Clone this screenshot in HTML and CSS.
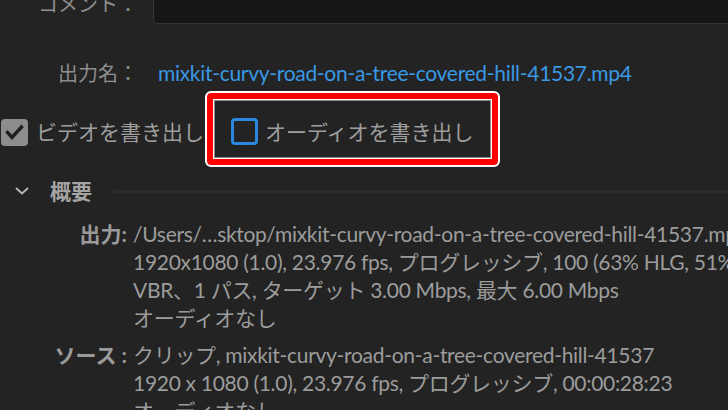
FILE: index.html
```html
<!DOCTYPE html>
<html lang="ja">
<head>
  <meta charset="UTF-8" />
  <meta name="viewport" content="width=device-width, initial-scale=1.0"/>
  <title>書き出し設定</title>
  <link rel="stylesheet" href="styles.css">
</head>
<body>
  <div class="panel">
    <div class="field comment-row">
      <div class="field-label">コメント：</div>
      <div class="comment-input"></div>
    </div>

    <div class="field name-row">
      <div class="field-label">出力名：</div>
      <div class="file-name">mixkit-curvy-road-on-a-tree-covered-hill-41537.mp4</div>
    </div>

    <div class="export-row">
      <div class="option video-option">
        <span class="checkbox checked">
          <svg width="27" height="27" viewBox="0 0 27 27">
            <path d="M6.5 13.5 L11 18.5 L20.5 8" fill="none" stroke="#1f1f1f" stroke-width="3.4" stroke-linecap="square"/>
          </svg>
        </span>
        <span>ビデオを書き出し</span>
      </div>
      <!-- highlight around audio export -->
      <div class="highlight">
        <div class="option audio-option">
          <span class="checkbox unchecked"></span>
          <span>オーディオを書き出し</span>
        </div>
      </div>
    </div>

    <div class="summary-head">
      <svg class="chevron" width="16" height="10" viewBox="0 0 16 10">
        <path d="M2 2 L8 7.5 L14 2" fill="none" stroke="#b5b5b5" stroke-width="2"/>
      </svg>
      <span class="summary-title">概要</span>
      <span class="summary-rule"></span>
    </div>

    <div class="info">
      <div class="info-label">出力:</div>
      <div class="info-lines">
        <div>/Users/…sktop/mixkit-curvy-road-on-a-tree-covered-hill-41537.mp4</div>
        <div>1920x1080 (1.0), 23.976 fps, プログレッシブ, 100 (63% HLG, 51% PQ)</div>
        <div>VBR、1 パス, ターゲット 3.00 Mbps, 最大 6.00 Mbps</div>
        <div>オーディオなし</div>
      </div>
    </div>

    <div class="info source">
      <div class="info-label">ソース :</div>
      <div class="info-lines">
        <div>クリップ, mixkit-curvy-road-on-a-tree-covered-hill-41537</div>
        <div>1920 x 1080 (1.0), 23.976 fps, プログレッシブ, 00:00:28:23</div>
        <div>オーディオなし</div>
      </div>
    </div>
  </div>
</body>
</html>
```

FILE: styles.css
```css
* {
  box-sizing: border-box;
  margin: 0;
  padding: 0;
}

body {
  width: 728px;
  height: 410px;
  overflow: hidden;
  background: #232323;
  color: #9c9c9c;
  font-family: "Lato", "Noto Sans CJK JP", sans-serif;
  font-size: 21px;
  line-height: 28px;
  letter-spacing: -0.3px;
}

.panel {
  white-space: nowrap;
  overflow: hidden;
}

/* top fields */
.field {
  display: flex;
  align-items: center;
}

.field-label {
  flex-shrink: 0;
  width: 138px;
  text-align: right;
  color: #8e8e8e;
  font-size: 20px;
  letter-spacing: 0;
}

.comment-row {
  height: 40px;
  margin-top: -16px;
}

.comment-input {
  margin-left: 15px;
  flex: 1;
  height: 40px;
  margin-right: -10px;
  background: #161616;
  border: 1px solid #333;
  border-radius: 4px;
}

.name-row {
  height: 28px;
  margin-top: 35px;
}

.file-name {
  margin-left: 20px;
  color: #3a98e4;
}

/* export checkboxes */
.export-row {
  display: flex;
  align-items: center;
  margin-top: 4px;
}

.option {
  display: flex;
  align-items: center;
  gap: 8px;
  color: #9e9e9e;
  letter-spacing: 0;
}

.video-option {
  flex-shrink: 0;
  width: 205px;
  padding-left: 1px;
  padding-top: 6px;
}

.checkbox {
  flex-shrink: 0;
  width: 27px;
  height: 27px;
  border-radius: 4px;
  display: inline-block;
}

.checkbox svg {
  display: block;
}

.checked {
  background: #8d8d8d;
}

.unchecked {
  border: 3px solid #2a88e2;
}

.highlight {
  flex-shrink: 0;
  border: 2px solid #fff;
  border-radius: 6px;
  box-shadow: inset 0 0 0 6px #f00, inset 0 0 0 7px #fff;
  padding: 7px;
}

.audio-option {
  width: 277px;
  height: 58px;
  border: 1px solid #8a8a8a;
  padding: 5px 0 0 16px;
  gap: 7px;
}

/* summary */
.summary-head {
  display: flex;
  align-items: center;
  height: 28px;
  margin-top: 10px;
}

.chevron {
  margin-left: 14px;
}

.summary-title {
  margin-left: 20px;
  font-weight: bold;
  color: #a4a4a4;
  letter-spacing: 0;
}

.summary-rule {
  flex: 1;
  height: 3px;
  margin-left: 21px;
  background: #2c2c2c;
}

.info {
  display: flex;
  margin-top: 15px;
}

.info.source {
  margin-top: 9px;
}

.info-label {
  flex-shrink: 0;
  width: 127px;
  text-align: right;
  font-weight: bold;
  color: #9a9a9a;
  letter-spacing: 0;
}

.info-lines {
  margin-left: 6px;
}
```
